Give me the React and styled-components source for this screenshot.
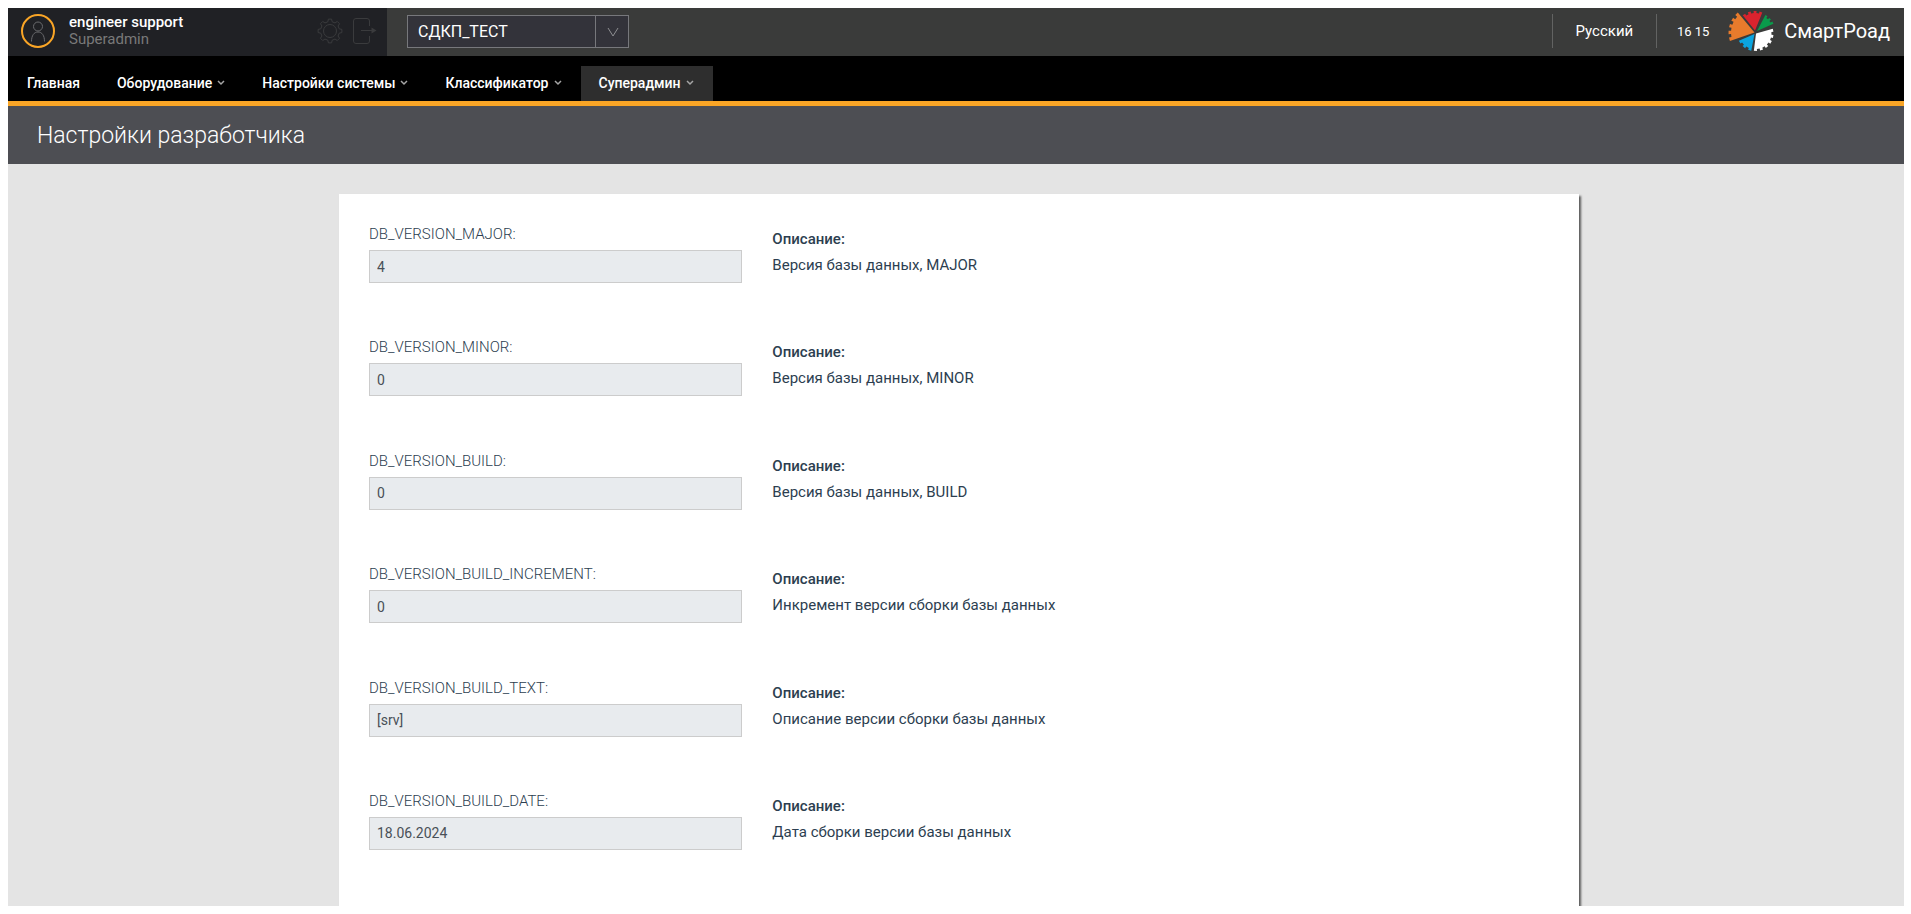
import React from 'react';
import styled, { createGlobalStyle } from 'styled-components';

const GlobalStyle = createGlobalStyle`
  *, *::before, *::after { box-sizing: border-box; }
  body {
    margin: 0;
    background: #fff;
    font-family: Roboto, "Liberation Sans", sans-serif;
    font-size: 15px;
    color: #2c3e50;
  }
  button, input, select { font-family: inherit; }
`;

const Page = styled.div`
  display: flex;
  flex-direction: column;
  height: 100vh;
  padding: 8px 7px 8px 8px;
`;

const TopBar = styled.header`
  flex: none;
  display: flex;
  align-items: center;
  height: 48px;
  background: #3a3b3a;
  color: #fff;
`;

const UserPanel = styled.div`
  display: flex;
  align-items: center;
  width: 379px;
  height: 48px;
  padding: 0 10px 2px 13px;
  background: #202125;
`;

const UserText = styled.div`
  display: flex;
  flex-direction: column;
  flex: 1;
  margin-left: 14px;
`;

const UserName = styled.span`
  font-size: 15px;
  line-height: 17px;
  font-weight: 500;
`;

const UserRole = styled.span`
  font-size: 15px;
  line-height: 17px;
  color: #797979;
`;

const IconButton = styled.button`
  display: flex;
  padding: 0;
  margin-left: 10px;
  border: 0;
  background: none;
  color: #3a3b3d;
  cursor: pointer;
`;

const SelectBox = styled.div`
  display: grid;
  grid-template-columns: 188px 34px;
  margin: 0 auto 1px 20px;
`;

const ProjectSelect = styled.select`
  grid-column: 1 / -1;
  grid-row: 1;
  height: 33px;
  padding: 0 44px 0 10px;
  appearance: none;
  border: 1px solid #77787c;
  border-radius: 0;
  background: #33333a;
  color: #fff;
  font-size: 16px;
`;

const SelectArrow = styled.span`
  grid-column: 2;
  grid-row: 1;
  z-index: 1;
  display: flex;
  align-items: center;
  justify-content: center;
  border-left: 1px solid #77787c;
  color: #8e8f92;
  pointer-events: none;
`;

const Language = styled.button`
  height: 34px;
  width: 105px;
  margin-bottom: 2px;
  border: solid #626362;
  border-width: 0 1px;
  background: none;
  color: #fff;
  font-size: 15px;
  cursor: pointer;
`;

const Clock = styled.time`
  margin: 0 19px 2px 20px;
  font-size: 13px;
`;

const Brand = styled.a`
  display: flex;
  align-items: center;
  gap: 10px;
  padding: 0 14px 2px 0;
  color: #fff;
  font-size: 20px;
  text-decoration: none;
`;

const Nav = styled.nav`
  flex: none;
  display: flex;
  align-items: flex-end;
  height: 50px;
  padding-left: 1px;
  border-bottom: 5px solid #f9a526;
  background: #000;
`;

const NavLink = styled.a`
  display: flex;
  align-items: center;
  gap: 5px;
  height: 35px;
  padding: 0 19px 1px 18px;
  background: ${({ $active }) => ($active ? '#2e2e2e' : 'transparent')};
  color: #fff;
  font-size: 14px;
  font-weight: 500;
  text-decoration: none;
  white-space: nowrap;

  svg { color: #a5a5a5; }
`;

const TitleBar = styled.div`
  flex: none;
  height: 58px;
  padding-left: 29px;
  background: #4d4e53;
`;

const Title = styled.h1`
  margin: 0;
  color: #fff;
  font-size: 23px;
  font-weight: 300;
  line-height: 60px;
`;

const Main = styled.main`
  flex: 1;
  min-height: 0;
  display: flex;
  justify-content: center;
  padding: 30px 0 0 6px;
  background: #e4e4e4;
  overflow: hidden;
`;

const Card = styled.form`
  display: flex;
  flex-direction: column;
  justify-content: space-between;
  width: 100%;
  max-width: 1240px;
  padding: 30px 30px 56px;
  background: #fff;
  box-shadow: 2px 2px 2px rgba(0, 0, 0, 0.6);
`;

const SettingRow = styled.div`
  display: grid;
  grid-template-columns: repeat(3, 1fr);
  column-gap: 30px;
`;

const Field = styled.div`
  display: flex;
  flex-direction: column;
  gap: 6px;
`;

const FieldLabel = styled.label`
  font-size: 15px;
  font-weight: 300;
  line-height: 20px;
`;

const FieldInput = styled.input`
  width: 100%;
  height: 33px;
  padding: 0 7px;
  border: 1px solid #ccc;
  border-radius: 0;
  background: #e8ebee;
  color: #495057;
  font-size: 14px;
  outline: none;
`;

const Description = styled.div`
  padding-top: 5px;
  font-size: 15px;
  line-height: 20px;
`;

const DescriptionTitle = styled.div`
  margin-bottom: 6px;
  font-weight: 500;
`;

const UserIcon = () => (
  <svg width="34" height="34" viewBox="0 0 34 34" fill="none" aria-hidden="true">
    <circle cx="17" cy="17" r="16" stroke="#f9a526" strokeWidth="2" />
    <circle cx="17" cy="12.500" r="4.500" stroke="#6a6b6e" />
    <path d="M10.500 27.500c0-6 2.500-9.500 6.500-9.500s6.500 3.500 6.500 9.500" stroke="#6a6b6e" />
  </svg>
);

const polar = (cx, cy, radius, angle) =>
  `${(cx + radius * Math.cos(angle)).toFixed(2)} ${(cy + radius * Math.sin(angle)).toFixed(2)}`;

const gearPath = (cx, cy, teeth, inner, outer) => {
  const step = (Math.PI * 2) / teeth;
  const points = [];
  for (let i = 0; i < teeth; i += 1) {
    const a = i * step;
    points.push(polar(cx, cy, outer, a - step * 0.17), polar(cx, cy, outer, a + step * 0.17));
    points.push(polar(cx, cy, inner, a + step * 0.29), polar(cx, cy, inner, a + step * 0.71));
  }
  return `M${points.join('L')}Z`;
};

const wedgePath = ({ cx, cy, from, to, segments, inner, outer }) => {
  const start = (from * Math.PI) / 180;
  const step = ((to - from) * Math.PI) / 180 / segments;
  const points = [`${cx} ${cy}`];
  for (let i = 0; i < segments; i += 1) {
    const radius = i % 2 ? inner : outer;
    points.push(polar(cx, cy, radius, start + step * i), polar(cx, cy, radius, start + step * (i + 1)));
  }
  return `M${points.join('L')}Z`;
};

const GearIcon = () => (
  <svg width="26" height="26" viewBox="0 0 26 26" fill="none" stroke="currentColor" aria-hidden="true">
    <path d={gearPath(13, 13, 8, 9.5, 12)} strokeLinejoin="round" />
    <circle cx="13" cy="13" r="6.500" />
  </svg>
);

const ExitIcon = () => (
  <svg width="24" height="26" viewBox="0 0 24 26" fill="none" stroke="currentColor" aria-hidden="true">
    <path d="M16.500 8V3q0-2.500-2.500-2.500H3Q.5.500.5 3v20q0 2.500 2.500 2.500h11q2.500 0 2.500-2.500v-5" />
    <path d="M8 12.500h13" />
    <path d="M18.500 9.500l5 3-5 3z" fill="currentColor" stroke="none" />
  </svg>
);

const Chevron = () => (
  <svg width="8" height="6" viewBox="0 0 8 6" fill="none" aria-hidden="true">
    <path d="M1 1l3 3 3-3" stroke="currentColor" strokeWidth="1.500" />
  </svg>
);

const logoWedges = [
  { fill: '#e87b2c', cx: 26.5, cy: 21.5, from: 161, to: 230, segments: 9, inner: 23.5, outer: 26 },
  { fill: '#d9232e', cx: 27, cy: 19.5, from: 231, to: 292, segments: 7, inner: 17.5, outer: 19.5 },
  { fill: '#0a9b4b', cx: 29, cy: 20, from: 298, to: 336, segments: 5, inner: 16, outer: 18 },
  { fill: '#ffffff', cx: 28, cy: 22.5, from: -16, to: 97, segments: 11, inner: 15.5, outer: 17.5 },
  { fill: '#0ba5df', cx: 26.5, cy: 23, from: 101, to: 157, segments: 5, inner: 15, outer: 17 },
];

const LogoIcon = () => (
  <svg width="46" height="40" viewBox="0 0 46 40" aria-hidden="true">
    {logoWedges.map((wedge) => (
      <path key={wedge.fill} fill={wedge.fill} d={wedgePath(wedge)} />
    ))}
  </svg>
);

const navItems = [
  { label: 'Главная' },
  { label: 'Оборудование', menu: true },
  { label: 'Настройки системы', menu: true },
  { label: 'Классификатор', menu: true },
  { label: 'Суперадмин', menu: true, active: true },
];

const settings = [
  { name: 'DB_VERSION_MAJOR', value: '4', text: 'Версия базы данных, MAJOR' },
  { name: 'DB_VERSION_MINOR', value: '0', text: 'Версия базы данных, MINOR' },
  { name: 'DB_VERSION_BUILD', value: '0', text: 'Версия базы данных, BUILD' },
  { name: 'DB_VERSION_BUILD_INCREMENT', value: '0', text: 'Инкремент версии сборки базы данных' },
  { name: 'DB_VERSION_BUILD_TEXT', value: '[srv]', text: 'Описание версии сборки базы данных' },
  { name: 'DB_VERSION_BUILD_DATE', value: '18.06.2024', text: 'Дата сборки версии базы данных' },
];

export default function App() {
  return (
    <>
      <GlobalStyle />
      <Page>
        <TopBar>
          <UserPanel>
            <UserIcon />
            <UserText>
              <UserName>engineer support</UserName>
              <UserRole>Superadmin</UserRole>
            </UserText>
            <IconButton type="button" aria-label="Настройки"><GearIcon /></IconButton>
            <IconButton type="button" aria-label="Выход"><ExitIcon /></IconButton>
          </UserPanel>
          <SelectBox>
            <ProjectSelect aria-label="Проект" defaultValue="test">
              <option value="test">СДКП_ТЕСТ</option>
            </ProjectSelect>
            <SelectArrow>
              <svg width="12" height="10" viewBox="0 0 12 10" fill="none" aria-hidden="true">
                <path d="M1 1l5 8 5-8" stroke="currentColor" />
              </svg>
            </SelectArrow>
          </SelectBox>
          <Language type="button">Русский</Language>
          <Clock>16 15</Clock>
          <Brand href="#home">
            <LogoIcon />
            СмартРоад
          </Brand>
        </TopBar>
        <Nav>
          {navItems.map(({ label, menu, active }) => (
            <NavLink key={label} href="#menu" $active={active}>
              {label}
              {menu && <Chevron />}
            </NavLink>
          ))}
        </Nav>
        <TitleBar>
          <Title>Настройки разработчика</Title>
        </TitleBar>
        <Main>
          <Card>
            {settings.map(({ name, value, text }) => (
              <SettingRow key={name}>
                <Field>
                  <FieldLabel htmlFor={name}>{name}:</FieldLabel>
                  <FieldInput id={name} value={value} readOnly />
                </Field>
                <Description>
                  <DescriptionTitle>Описание:</DescriptionTitle>
                  {text}
                </Description>
              </SettingRow>
            ))}
          </Card>
        </Main>
      </Page>
    </>
  );
}
